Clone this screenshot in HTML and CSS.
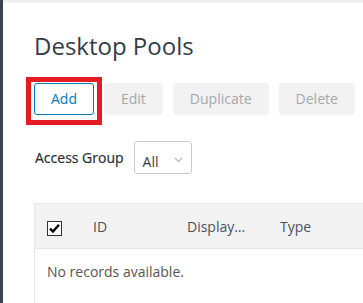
FILE: index.html
```html
<!DOCTYPE html>
<html>
<head>
<meta charset="utf-8">
<link rel="stylesheet" href="styles.css">
</head>
<body>
<div class="app">
  <div class="sidebar"></div>
  <div class="main">
    <div class="topstrip"></div>
    <div class="content">
      <h1 class="title">Desktop Pools</h1>
      <div class="toolbar">
        <button class="btn btn-primary highlighted">Add</button>
        <button class="btn btn-disabled">Edit</button>
        <button class="btn btn-disabled">Duplicate</button>
        <button class="btn btn-disabled">Delete</button>
      </div>
      <div class="filter">
        <span class="filter-label">Access Group</span>
        <div class="select">
          <span class="select-value">All</span>
          <svg class="chevron" width="9" height="6" viewBox="0 0 9 6"><path d="M1 1 L4.5 4.5 L8 1" fill="none" stroke="#b4b9be" stroke-width="1.2"/></svg>
        </div>
      </div>
      <div class="grid">
        <div class="grid-head">
          <div class="cell cell-check">
            <svg class="checkbox" width="15" height="15" viewBox="0 0 15 15"><rect x="0.5" y="0.5" width="14" height="14" fill="#fff" stroke="#333"/><path d="M3 7.6 L6 10.6 L12 3.8" fill="none" stroke="#000" stroke-width="2.4"/></svg>
          </div>
          <div class="cell cell-id">ID</div>
          <div class="cell cell-display">Display…</div>
          <div class="cell cell-type">Type</div>
        </div>
        <div class="grid-body">
          <div class="empty">No records available.</div>
        </div>
      </div>
    </div>
  </div>
</div>
</body>
</html>
```

FILE: styles.css
```css
* { box-sizing: border-box; }
html, body { margin: 0; padding: 0; height: 100%; overflow: hidden; }
body {
  font-family: "Open Sans", "Liberation Sans", sans-serif;
  background: #fff;
  color: #565656;
}
.app { display: flex; height: 303px; }
.sidebar { width: 3px; background: #3a4450; flex: none; }
.main { flex: 1; display: flex; flex-direction: column; min-width: 0; }
.topstrip { height: 3px; background: #f0f0f0; flex: none; }
.content { padding: 27px 0 0 31px; }
.title {
  margin: 0;
  font-size: 24px;
  line-height: 32px;
  font-weight: 400;
  color: #333d47;
}
.toolbar { display: flex; gap: 10px; margin-top: 21px; }
.btn {
  height: 32px;
  padding: 0 16px;
  font-family: inherit;
  font-size: 14px;
  line-height: 20px;
  border-radius: 3px;
  border: 1px solid transparent;
  background: #f2f2f2;
  cursor: default;
}
.btn-primary { background: #fff; border-color: #0079b8; color: #0079b8; }
.btn-disabled { color: #a2a8ae; background: #f2f2f2; }
.highlighted { position: relative; }
.highlighted::after {
  content: "";
  position: absolute;
  top: -7px; bottom: -11px; left: -9px; right: -9px;
  border: 5px solid #e41b23;
}
.filter { display: flex; align-items: center; margin-top: 26px; }
.filter-label { font-size: 14px; line-height: 20px; color: #262d36; font-weight: 400; margin-left: 1px; -webkit-text-stroke: 0.2px #262d36; }
.select {
  margin-left: 10px;
  width: 58px; height: 33px;
  border: 1px solid #ccc;
  border-radius: 3px;
  display: flex;
  align-items: flex-start;
  padding: 10px 0 0 8px;
}
.select-value { font-size: 14px; line-height: 20px; color: #333d47; }
.chevron { margin-left: 15px; margin-top: 5px; }
.grid { margin-top: 29px; border-left: 1px solid #e6e6e6; }
.grid-head {
  display: flex;
  height: 46px;
  background: #f2f2f2;
  border-top: 1px solid #e6e6e6;
  border-bottom: 1px solid #e6e6e6;
  align-items: center;
}
.cell { font-size: 14px; line-height: 20px; color: #4a525b; padding-left: 12px; white-space: nowrap; flex: none; }
.cell-check { width: 46px; display: flex; align-items: center; padding-top: 5px; }
.cell-id { width: 94px; padding-top: 2px; }
.cell-display { width: 93px; padding-top: 2px; }
.cell-type { width: 100px; padding-top: 2px; }
.grid-body { height: 54px; padding: 13px 0 0 12px; }
.empty { font-size: 14px; line-height: 20px; color: #565656; }
```
